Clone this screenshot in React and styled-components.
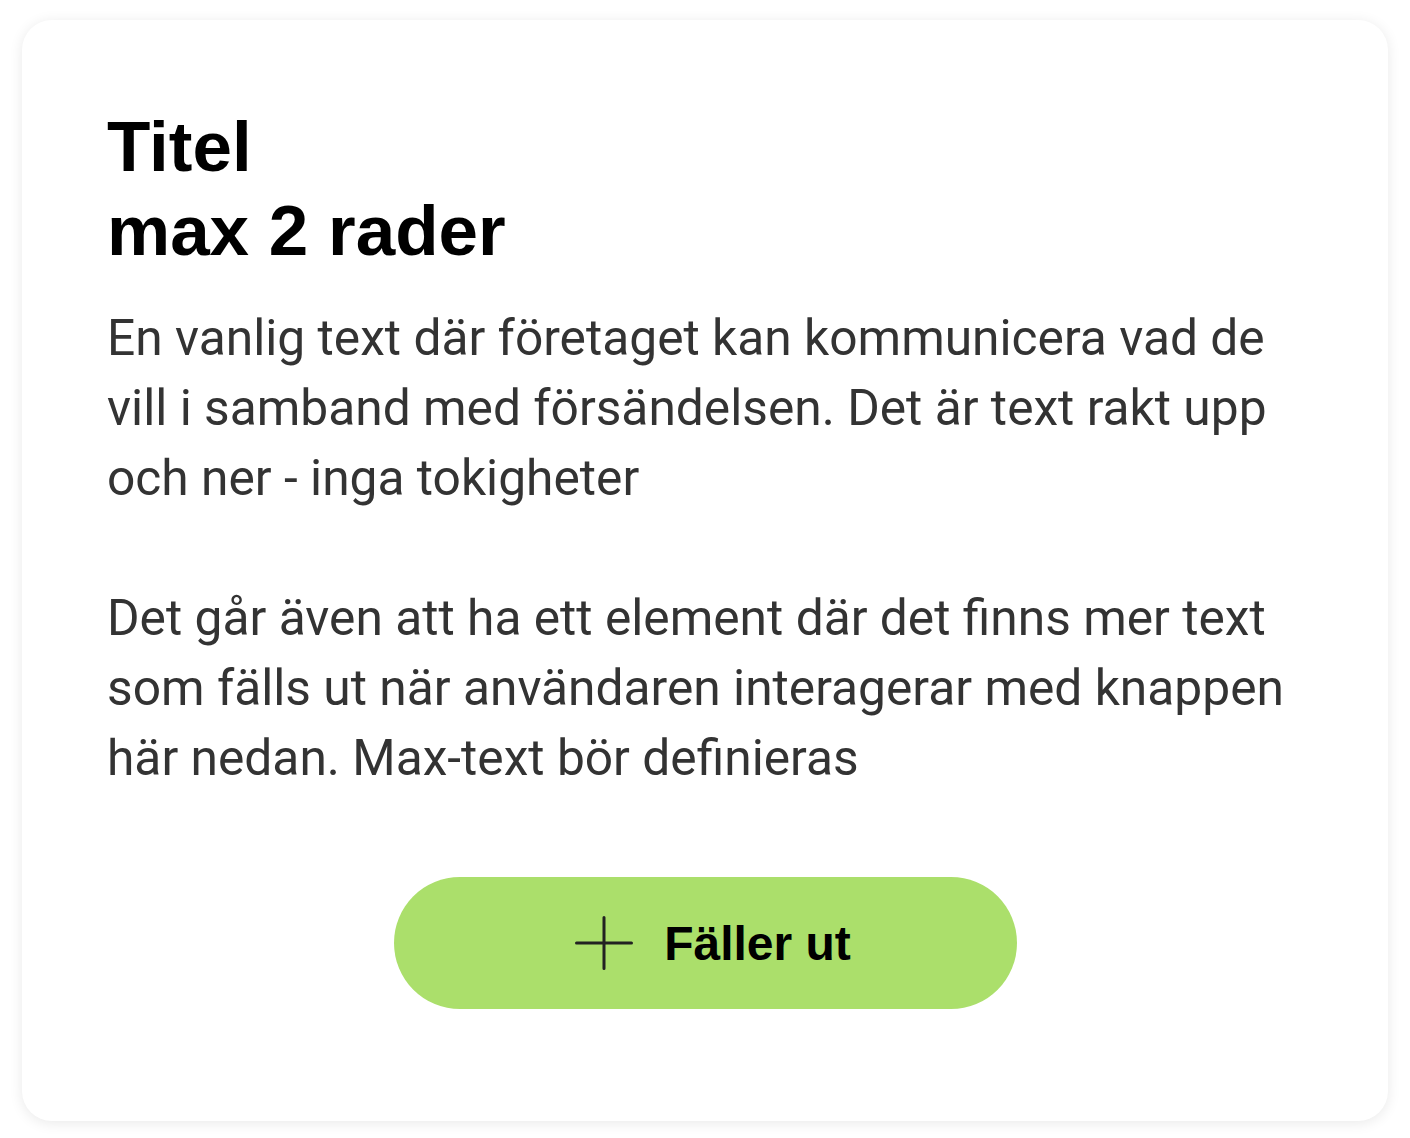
import React from 'react'
import styled, { createGlobalStyle } from 'styled-components'

const GlobalStyle = createGlobalStyle`
  html, body {
    margin: 0;
    padding: 0;
    background: #ffffff;
  }
  body {
    font-family: Roboto, "Liberation Sans", Arial, sans-serif;
  }
`;

const Page = styled.div`
  padding: 20px 22px 17px 22px;
`;

const Card = styled.div`
  background: #fff;
  border-radius: 30px;
  box-shadow: 0 2px 14px rgba(0, 0, 0, 0.09);
  padding: 85px 85px 112px 85px;
  display: flex;
  flex-direction: column;
  box-sizing: border-box;
  height: 1101px;
`;

const Title = styled.h1`
  margin: 0;
  font-family: "Liberation Sans", Arial, sans-serif;
  font-weight: 700;
  font-size: 71px;
  line-height: 84px;
  color: #000;
`;

const Body = styled.div`
  margin-top: 30px;
  font-family: Roboto, sans-serif;
  font-size: 49.7px;
  line-height: 70px;
  color: #333333;
`;

const Paragraph = styled.p`
  margin: 0;
  & + & {
    margin-top: 70px;
  }
`;

const ButtonRow = styled.div`
  display: flex;
  justify-content: center;
  margin-top: 84px;
`;

const ExpandButton = styled.button`
  display: flex;
  align-items: center;
  justify-content: center;
  gap: 31px;
  width: 623px;
  height: 132px;
  padding: 0 0 0 16px;
  border: 0;
  border-radius: 66px;
  background: #abdf6b;
  color: #000;
  font-family: "Liberation Sans", Arial, sans-serif;
  font-weight: 700;
  font-size: 48px;
  cursor: pointer;
`;

const PlusIcon = () => (
  <svg width="58" height="54" viewBox="0 0 58 54" fill="none">
    <path d="M1.5 27H56.5M29 1.5V52.5" stroke="#222" strokeWidth="3" strokeLinecap="round" />
  </svg>
);

const App = () => {
  return (
    <>
      <GlobalStyle />
      <Page>
        <Card>
          <Title>
            Titel
            <br />
            max 2 rader
          </Title>
          <Body>
            <Paragraph>
              En vanlig text där företaget kan kommunicera vad de vill i samband med försändelsen. Det är text rakt upp och ner - inga tokigheter
            </Paragraph>
            <Paragraph>
              Det går även att ha ett element där det finns mer text som fälls ut när användaren interagerar med knappen här nedan. Max-text bör definieras
            </Paragraph>
          </Body>
          <ButtonRow>
            <ExpandButton>
              <PlusIcon />
              Fäller ut
            </ExpandButton>
          </ButtonRow>
        </Card>
      </Page>
    </>
  )
}

export default App
